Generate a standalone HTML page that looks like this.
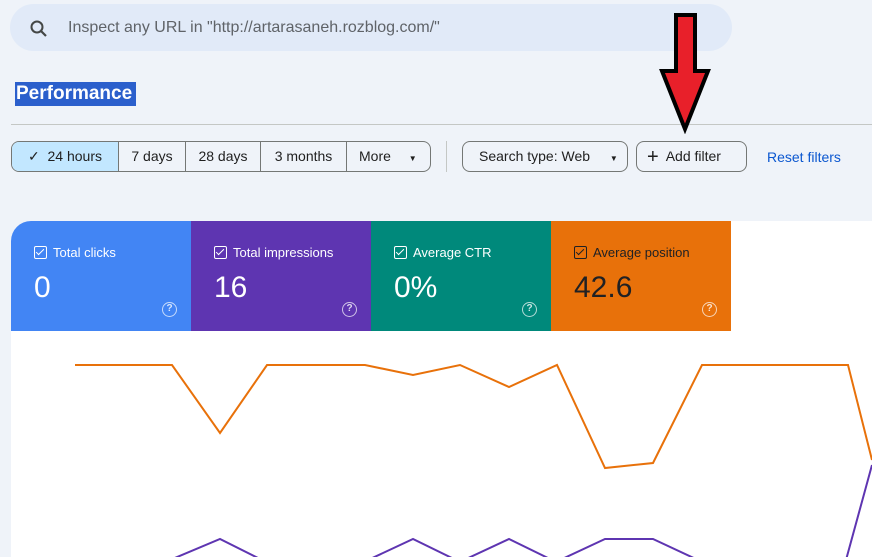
<!DOCTYPE html>
<html><head><meta charset="utf-8"><style>
*{box-sizing:border-box;margin:0;padding:0}
body{width:872px;height:557px;overflow:hidden;background:#eff3f9;font-family:"Liberation Sans",sans-serif;position:relative}
.search{position:absolute;left:10px;top:4px;width:722px;height:47px;border-radius:24px;background:#e1eaf8;}
.search span{position:absolute;left:58px;top:15px;font-size:16px;color:#5f6368}
.title{position:absolute;left:15px;top:82px;width:121px;height:24px;background:#2b5fcc;color:#fff;font-size:19px;font-weight:bold;padding:1px 1px;line-height:22px}
.hr{position:absolute;left:11px;right:0;top:124px;height:1px;background:#c4c7c5}
.seg{position:absolute;left:11px;top:141px;height:31px;border:1px solid #747775;border-radius:8px;display:flex;overflow:hidden;font-size:14px;color:#1f1f1f}
.seg div{border-left:1px solid #747775;line-height:29px;text-align:center}
.seg div:first-child{border-left:none;background:#c2e7ff}
.btn{position:absolute;top:141px;height:31px;border:1px solid #747775;border-radius:8px;font-size:14px;color:#1f1f1f;line-height:29px}
.vsep{position:absolute;left:446px;top:141px;width:1px;height:31px;background:#c4c7c5}
.reset{position:absolute;left:767px;top:149px;font-size:14px;color:#0b57d0}
.card{position:absolute;left:11px;top:221px;right:0;bottom:0;background:#fff;border-top-left-radius:20px;overflow:hidden}
.tile{position:absolute;top:0;width:180px;height:110px;color:#fff}
.tile .l{position:absolute;left:23px;top:24px;font-size:13px;display:flex;align-items:center;gap:6px}
.cb{width:13px;height:13px;border:1.5px solid currentColor;border-radius:2px;position:relative}
.cb:after{content:"";position:absolute;left:3px;top:0px;width:3px;height:7px;border:solid currentColor;border-width:0 1.5px 1.5px 0;transform:rotate(45deg)}
.tile .v{position:absolute;left:23px;top:50px;font-size:30px}
.q{position:absolute;left:151px;top:81px;width:15px;height:15px;border:1.5px solid rgba(255,255,255,.7);border-radius:50%;font-size:10px;font-weight:bold;text-align:center;line-height:12px;color:rgba(255,255,255,.8)}
</style></head><body>
<div class="search">
<svg style="position:absolute;left:19px;top:15px" width="20" height="20" viewBox="0 0 20 20"><circle cx="8" cy="8" r="5.5" fill="none" stroke="#444746" stroke-width="2"/><path d="M12 12l5 5" stroke="#444746" stroke-width="2.2"/></svg>
<span>Inspect any URL in "http://artarasaneh.rozblog.com/"</span></div>
<div class="title">Performance</div>
<div class="hr"></div>
<div class="seg">
<div style="width:106px">✓&nbsp; 24 hours</div>
<div style="width:67px">7 days</div>
<div style="width:75px">28 days</div>
<div style="width:86px">3 months</div>
<div style="width:84px;text-align:left;padding-left:12px">More <span style="font-size:8px;margin-left:14px">▼</span></div>
</div>
<div class="vsep"></div>
<div class="btn" style="left:462px;width:166px;padding-left:16px">Search type: Web <span style="font-size:8px;margin-left:16px">▼</span></div>
<div class="btn" style="left:636px;width:111px;padding-left:10px"><span style="font-size:20px;vertical-align:-2px">+</span>&nbsp; Add filter</div>
<div class="reset">Reset filters</div>
<svg style="position:absolute;left:658px;top:12px" width="54" height="122" viewBox="0 0 54 122"><path d="M18 3H37V59H50L27 117L4 59H18Z" fill="#e8202a" stroke="#000" stroke-width="4" stroke-linejoin="miter"/></svg>
<div class="card">
<div class="tile" style="left:0;background:#4285f4"><div class="l"><span class="cb"></span>Total clicks</div><div class="v">0</div><div class="q">?</div></div>
<div class="tile" style="left:180px;background:#5e35b1"><div class="l"><span class="cb"></span>Total impressions</div><div class="v">16</div><div class="q">?</div></div>
<div class="tile" style="left:360px;background:#00897b"><div class="l"><span class="cb"></span>Average CTR</div><div class="v">0%</div><div class="q">?</div></div>
<div class="tile" style="left:540px;background:#e8710a;color:#202124"><div class="l"><span class="cb"></span>Average position</div><div class="v">42.6</div><div class="q">?</div></div>
</div>
<svg style="position:absolute;left:0;top:0" width="872" height="557">
<polyline fill="none" stroke="#e8710a" stroke-width="2" points="75,365 172,365 220,433 267,365 365,365 413,375 460,365 509,387 557,365 605,468 653,463 702,365 848,365 872,460"/>
<polyline fill="none" stroke="#5e35b1" stroke-width="2" points="170,560 220,539 262,560 368,560 413,539 456,560 464,560 509,539 552,560 560,560 605,539 653,539 698,560 846,560 872,465"/>
</svg>
</body></html>
